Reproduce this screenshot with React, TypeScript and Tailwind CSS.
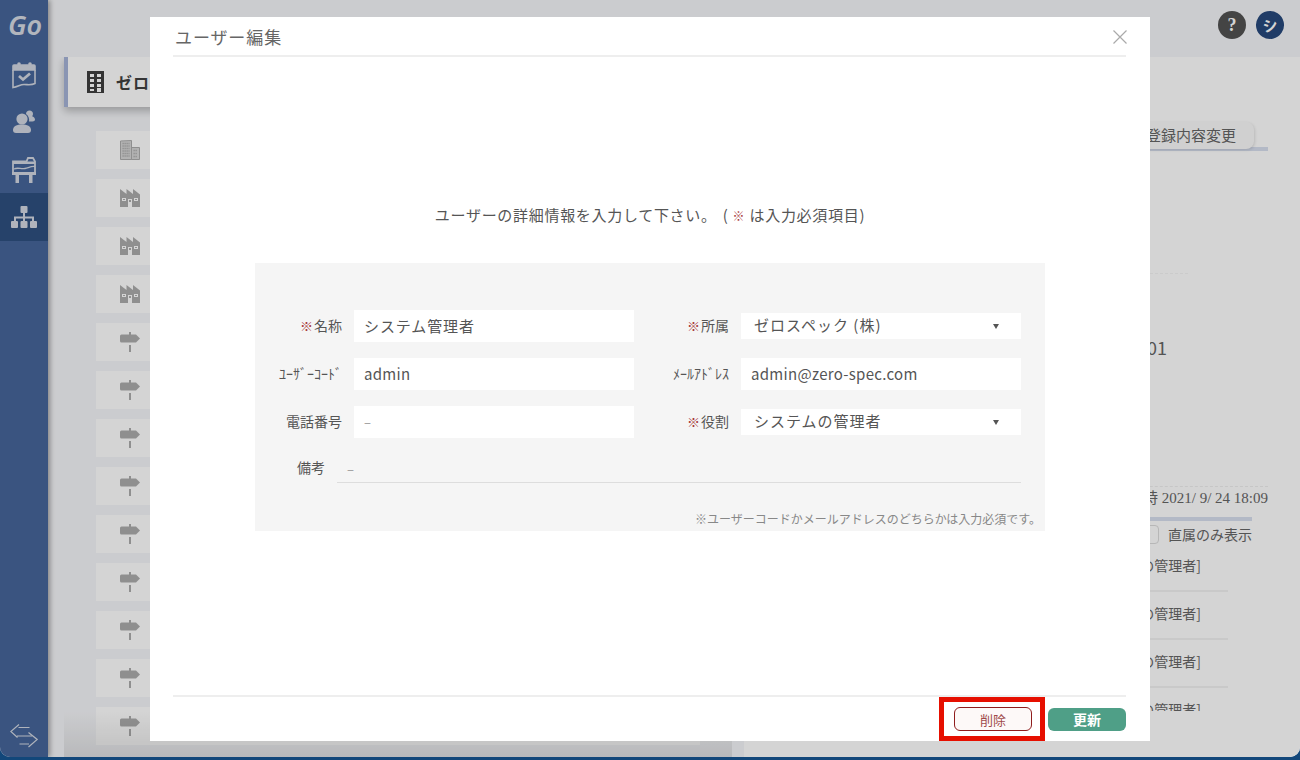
const jp = "font-['Noto_Sans_CJK_JP',sans-serif]";

function CalendarIcon() {
  return (
    <svg width="26" height="28" viewBox="0 0 26 28" fill="none" stroke="#d3d8e2" strokeWidth="1.6">
      <path d="M2 9h22V5a1 1 0 0 0-1-1H3a1 1 0 0 0-1 1z" fill="#d3d8e2" />
      <circle cx="8" cy="3" r="1.8" fill="#d3d8e2" stroke="none" />
      <circle cx="19" cy="3" r="1.8" fill="#d3d8e2" stroke="none" />
      <path d="M2 9v17.5c5-.5 7-3 11-3s7 1 11-1V9" />
      <path d="M8 15l4 3.5 7-6" strokeWidth="2.8" />
    </svg>
  );
}

function UsersIcon() {
  return (
    <svg width="24" height="24" viewBox="0 0 24 24" fill="#d3d8e2">
      <circle cx="10" cy="9" r="5.6" />
      <path d="M1 20c0-4 4-5.6 9-5.6s9 1.6 9 5.6c0 2-1 3-3 3H4c-2 0-3-1-3-3z" />
      <path d="M14 4c0-2 1.500-3.500 3.500-3.500S21 2 21 4c0 1-.4 1.700-.9 2.300 1.600.6 2.900 1.700 2.900 3.200 0 1.200-1 2-2.500 2H17c.6-2.800-.4-5.600-3-7.500z" />
    </svg>
  );
}

function BoardIcon() {
  return (
    <svg width="24" height="26" viewBox="0 0 24 26" fill="none" stroke="#d3d8e2" strokeWidth="1.800">
      <path d="M1 4.500h13.500L16 1h5l2 3.500v11.500H1z" />
      <path d="M1 4.500h22v2.500H1z" fill="#d3d8e2" stroke="none" />
      <path d="M2 12c4-2 7 .5 11-.5s6-2.500 10-2" strokeWidth="1.300" />
      <path d="M0 15h24v3H0z" fill="#d3d8e2" stroke="none" />
      <path d="M3.500 18h3.500v8H3.500zM17 18h3.500v8H17z" fill="#d3d8e2" stroke="none" />
    </svg>
  );
}

function SitemapIcon() {
  return (
    <svg width="26" height="22" viewBox="0 0 26 22" fill="#d3d8e2">
      <rect x="9.500" y="0" width="7" height="7" rx="1" />
      <path d="M12 7h2v3.500h9V15h-2v-2.500h-7V15h-2v-2.500H5V15H3v-4.500h9z" />
      <rect x="0" y="15" width="7" height="7" rx="1" />
      <rect x="9.500" y="15" width="7" height="7" rx="1" />
      <rect x="19" y="15" width="7" height="7" rx="1" />
    </svg>
  );
}

function SwapIcon() {
  return (
    <svg width="28" height="24" viewBox="0 0 28 24" fill="none" stroke="#d3d8e2" strokeWidth="1.200">
      <path d="M9 0.500L0.800 7.500l6.700 6M8.500 3.500h11M7 12h15" />
      <path d="M18.500 8.500l8.700 7-8.700 7.500M9.500 20h9.500" />
    </svg>
  );
}

function TitleBuildingIcon() {
  return (
    <svg width="17" height="22" viewBox="0 0 17 22" fill="#3f3f3f" fillRule="evenodd">
      <path d="M0 0h17v22H0zM3 3v3h4V3zm7 0v3h4V3zM3 8v3h4V8zm7 0v3h4V8zM3 13v3h4v-3zm7 0v3h4v-3zM3 18v2h4v-2zm7-1v4h4v-4z" />
    </svg>
  );
}

function OfficeIcon() {
  return (
    <svg width="20" height="20" viewBox="0 0 20 20" fill="#d6d6d6" stroke="#adadad">
      <path d="M.500 19.500V1l11-.500v19zM11.500 7.500h8v12h-8z" strokeWidth="1" />
      <path d="M2.500 3.500h7M2.500 6h7M2.500 8.500h7M2.500 11h7M2.500 13.500h7M2.500 16h7M13.500 10.500h4M13.500 13.500h4M13.500 16.500h4" strokeWidth="1.500" strokeDasharray="1.300 .7" fill="none" />
    </svg>
  );
}

function FactoryIcon() {
  return (
    <svg width="20" height="18" viewBox="0 0 20 18" fill="#adadad" fillRule="evenodd">
      <path d="M0 0l6.500 5V0L13 5V0l7 5.500V18H0zM2 9v3h4V9zm12 0v3h4V9zM8 10v8h4v-8z" />
      <path d="M3 10h2v1H3zM15 10h2v1h-2zM9 11h2v2H9z" />
    </svg>
  );
}

function SignIcon() {
  return (
    <svg width="20" height="20" viewBox="0 0 20 20" fill="#adadad">
      <path d="M9 0h2v3H9zM9 13h2v7H9z" />
      <path d="M1.500 2.500H16l4 4-4 4H1.500A1.500 1.500 0 0 1 0 9V4a1.500 1.500 0 0 1 1.500-1.500z" />
    </svg>
  );
}

const treeRows = ["office", "factory", "factory", "factory", "sign", "sign", "sign", "sign", "sign", "sign", "sign", "sign", "sign"];

function TreeRow({ kind }: { kind: string }) {
  return (
    <div className="h-[38px] w-[604px] bg-white flex items-center pl-[24px] shrink-0">
      {kind === "office" && <OfficeIcon />}
      {kind === "factory" && <FactoryIcon />}
      {kind === "sign" && <SignIcon />}
    </div>
  );
}

function Sidebar() {
  return (
    <aside className="w-[48px] h-full bg-[#46669a] flex flex-col shrink-0 shadow-[2px_0_5px_rgba(0,0,0,0.35)] relative z-10">
      <div className="h-[50px] pl-[2px] flex items-center justify-center text-[#d6dbe4] font-semibold italic text-[27px] font-['Noto_Sans',sans-serif]">
        Go
      </div>
      <div className="h-[48px] flex items-center justify-center pt-[2px]"><CalendarIcon /></div>
      <div className="h-[48px] flex items-center justify-center"><UsersIcon /></div>
      <div className="h-[48px] flex items-center justify-center"><BoardIcon /></div>
      <div className="h-[48px] mt-[-1px] flex items-center justify-center bg-[#2e5080]"><SitemapIcon /></div>
      <div className="mt-auto h-[33px] pb-[9px] flex items-center justify-center"><SwapIcon /></div>
    </aside>
  );
}

function LeftPanel() {
  return (
    <div className="w-[684px] pl-[16px] flex flex-col shrink-0 relative overflow-hidden">
      <div className="h-[50px] w-[660px] bg-white border-l-[4px] border-[#a6b4d8] shadow-[0_4px_8px_rgba(0,0,0,0.25)] flex items-center pl-[19px] gap-[12px] shrink-0">
        <TitleBuildingIcon />
        <span className="font-bold text-[16px] text-[#3f3f3f] tracking-[1px]">ゼロスペック（株）</span>
      </div>
      <div className="pl-[32px] pt-[24px] flex flex-col gap-[10px]">
        {treeRows.map((kind, i) => (
          <TreeRow key={i} kind={kind} />
        ))}
      </div>
      <div className="absolute left-[16px] right-0 bottom-0 h-[46px] bg-gradient-to-b from-transparent to-[#00000018]" />
    </div>
  );
}

function RightPanel() {
  const roles = [0, 1, 2, 3];
  return (
    <div className="ml-[12px] flex-1 bg-white flex flex-col text-[#666] text-[14px]">
      <div className="mt-[65px] mr-[32px] border-b-[4px] border-[#d8dfef] flex justify-end pr-[14px]">
        <div className="h-[27px] -mb-[2px] w-[160px] bg-[#fbfbfb] rounded-[8px] shadow-[1px_1px_3px_rgba(0,0,0,0.12)] flex items-center justify-end pr-[18px] text-[15px] relative">
          登録内容変更
        </div>
      </div>
      <div className="mt-[122px] mr-[112px] border-b border-dashed border-[#f4f4f4]" />
      <div className="mt-[61px] h-[24px] flex justify-end pr-[133px] text-[18px] leading-[24px]">0000000001</div>
      <div className="mt-[127px] mr-[32px] border-b border-dashed border-[#efefef]" />
      <div className="h-[22px] flex justify-end pr-[32px] items-center text-[15px] font-['Liberation_Serif','Noto_Sans_CJK_JP',serif]">更新日時 2021/ 9/ 24 18:09</div>
      <div className="mt-[8px] mr-[48px] h-[4px] bg-[#d8dfef]" />
      <div className="mt-[4px] h-[19px] flex justify-end items-center pr-[48px] gap-[9px]">
        <span className="w-[20px] h-[19px] rounded-[4px] border border-[#dcdcdc] bg-white" />
        <span className="text-[14px]">直属のみ表示</span>
      </div>
      <div className="h-[167px] overflow-hidden flex flex-col">
        {roles.map((r) => (
          <div key={r} className="shrink-0 h-[48px] mr-[72px] border-b-2 border-[#f2f2f2] flex items-center justify-end pr-[27px] pb-[4px]">
            システムの管理者]
          </div>
        ))}
      </div>
    </div>
  );
}

function Req() {
  return <span className="text-[#a83a3a] text-[13px] mr-[1px]">※</span>;
}

function Label({ width, req, text }: { width: string; req?: boolean; text: string }) {
  return (
    <div className={`${width} shrink-0 text-right text-[#555] text-[14px] mr-[12px] pb-[2px] whitespace-nowrap`}>
      {req && <Req />}
      {text}
    </div>
  );
}

function TextBox({ value, muted, latin }: { value: string; muted?: boolean; latin?: boolean }) {
  return (
    <input
      readOnly
      value={value}
      className={`w-[280px] h-[32px] bg-white pl-[10px] pb-[2px] outline-none ${latin ? "tracking-[0.3px]" : "tracking-[0.9px]"} ${muted ? "text-[#999] text-[13px]" : "text-[#555] text-[15px]"}`}
    />
  );
}

function SelectBox({ value }: { value: string }) {
  return (
    <div className="w-[280px] h-[26px] my-[3px] bg-white pl-[13px] pr-[22px] pb-[2px] flex items-center justify-between text-[15px] text-[#555] tracking-[1px]">
      <span>{value}</span>
      <span className="w-0 h-0 mt-[2px] border-x-[3px] border-x-transparent border-t-[5px] border-t-[#555]" />
    </div>
  );
}

function UserModal() {
  return (
    <div className={`absolute left-[150px] top-[17px] w-[1000px] h-[724px] bg-white z-30 flex flex-col ${jp}`}>
      <div className="ml-[23px] mr-[24px] h-[40px] border-b-2 border-[#eee] flex items-center justify-between pl-[2px] shrink-0">
        <span className="text-[17px] leading-[24px] mt-[2px] text-[#666] tracking-[0.9px]">ユーザー編集</span>
        <svg width="14" height="14" viewBox="0 0 14 14" stroke="#aaa" strokeWidth="1.200" className="mt-[2px] -mr-[1px]">
          <path d="M.500.500l13 13M13.500.500l-13 13" />
        </svg>
      </div>
      <p className="mt-[148px] h-[20px] leading-[20px] text-center text-[15px] text-[#555] tracking-[0.7px] whitespace-nowrap">
        ユーザーの詳細情報を入力して下さい。<span className="ml-[6px]">(</span>
        <span className="text-[#a83a3a] text-[12px] tracking-normal ml-[4px] mr-[5px]">※</span>
        は入力必須項目)
      </p>
      <div className="mt-[38px] ml-[105px] w-[790px] h-[268px] bg-[#f5f5f5] pt-[47px] shrink-0 flex flex-col">
        <div className="flex flex-col gap-[16px]">
          <div className="flex items-center">
            <Label width="w-[87px]" req text="名称" />
            <TextBox value="システム管理者" />
            <Label width="w-[95px]" req text="所属" />
            <SelectBox value="ゼロスペック (株)" />
          </div>
          <div className="flex items-center">
            <Label width="w-[87px]" text="ﾕｰｻﾞｰｺｰﾄﾞ" />
            <TextBox value="admin" latin />
            <Label width="w-[95px]" text="ﾒｰﾙｱﾄﾞﾚｽ" />
            <TextBox value="admin@zero-spec.com" latin />
          </div>
          <div className="flex items-center">
            <Label width="w-[87px]" text="電話番号" />
            <TextBox value="–" muted />
            <Label width="w-[95px]" req text="役割" />
            <SelectBox value="システムの管理者" />
          </div>
        </div>
        <div className="mt-[15px] flex items-center">
          <Label width="w-[70px]" text="備考" />
          <div className="w-[684px] h-[30px] border-b border-[#ddd] pl-[10px] pt-[2px] flex items-center text-[13px] text-[#999]">–</div>
        </div>
        <p className="mt-[27px] pr-[4px] text-right text-[12px] text-[#888] whitespace-nowrap">
          ※ユーザーコードかメールアドレスのどちらかは入力必須です。
        </p>
      </div>
      <div className="mt-auto ml-[23px] mr-[24px] border-t-2 border-[#eee] pt-[10px] pb-[10px] flex justify-end items-center gap-[16px]">
        <button className="w-[78px] h-[24px] rounded-[6px] border border-[#8f1d1d] bg-[#fdf9f8] text-[#a04a4a] text-[13px] leading-none">
          削除
        </button>
        <button className="w-[78px] h-[23px] rounded-[6px] bg-[#4f9f87] text-white font-bold text-[14px] leading-none">
          更新
        </button>
      </div>
    </div>
  );
}

export default function App() {
  return (
    <div className={`relative w-[1300px] h-[760px] overflow-hidden bg-[#12477a] ${jp}`}>
      <div className="relative h-[757px] overflow-hidden rounded-b-[10px] bg-[#f5f6f9] flex">
        <Sidebar />
        <div className="flex-1 flex flex-col min-w-0">
          <header className="h-[57px] shrink-0 flex items-center justify-end pr-[16px] pb-[7px] gap-[10px]">
            <span className="w-[28px] h-[28px] rounded-full bg-[#525252] text-white font-bold text-[18px] font-['Liberation_Serif',serif] flex items-center justify-center">?</span>
            <span className="w-[28px] h-[28px] rounded-full bg-[#27497c] text-white font-bold text-[15px] flex items-center justify-center -rotate-12">シ</span>
          </header>
          <div className="flex-1 flex min-h-0">
            <LeftPanel />
            <RightPanel />
          </div>
        </div>
        <div className="absolute inset-0 bg-black/[.17] z-20" />
      </div>
      <UserModal />
      <div className="absolute left-[939px] top-[697px] w-[106px] h-[44px] border-[5px] border-[#e60f00] z-40" />
    </div>
  );
}
